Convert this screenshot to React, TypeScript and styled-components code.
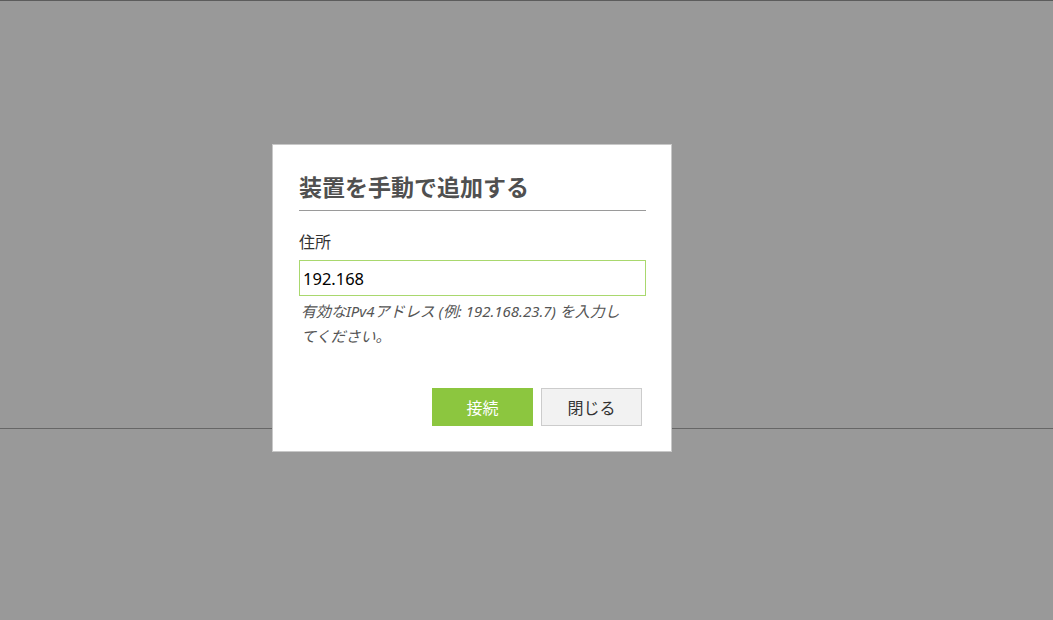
import styled, { createGlobalStyle } from 'styled-components';

const GlobalStyle = createGlobalStyle`
    html, body {
        margin: 0;
        padding: 0;
    }
    body {
        font-family: 'Noto Sans', 'Noto Sans CJK JP', sans-serif;
        background: #999999;
    }
`;

function App() {
    return (
        <Page>
            <GlobalStyle />
            <Backdrop>
                <UpperPane />
            </Backdrop>
            <Dialog>
                <Title>装置を手動で追加する</Title>
                <Field>
                    <Label>住所</Label>
                    <Input defaultValue="192.168" />
                    <Hint>
                        有効なIPv4アドレス (例: 192.168.23.7) を入力し
                        <br />
                        てください。
                    </Hint>
                </Field>
                <Actions>
                    <Button variant="primary">接続</Button>
                    <Button variant="secondary">閉じる</Button>
                </Actions>
            </Dialog>
        </Page>
    );
}

export default App;

const Page = styled.div`
    position: relative;
    width: 1053px;
    height: 620px;
    overflow: hidden;
    background: #999999;
`;

const Backdrop = styled.div`
    height: 100%;
    display: flex;
    flex-direction: column;
`;

const UpperPane = styled.div`
    height: 427px;
    border-top: 1px solid #5c5c5c;
    border-bottom: 1px solid #666666;
`;

const Dialog = styled.div`
    position: absolute;
    left: 272px;
    top: 144px;
    width: 400px;
    height: 308px;
    box-sizing: border-box;
    padding: 24px 25px 0 26px;
    background: #ffffff;
    border: 1px solid #c8c8c8;
    display: flex;
    flex-direction: column;
`;

const Title = styled.h2`
    margin: 0;
    padding-bottom: 7px;
    font-family: 'Noto Sans CJK JP', sans-serif;
    font-size: 23px;
    font-weight: 700;
    line-height: 34px;
    color: #505050;
    border-bottom: 1px solid #9a9a9a;
`;

const Field = styled.div`
    display: flex;
    flex-direction: column;
    margin-top: 19px;
`;

const Label = styled.label`
    font-family: 'Noto Sans CJK JP', sans-serif;
    font-size: 16px;
    line-height: 22px;
    color: #333333;
    margin-bottom: 8px;
`;

const Input = styled.input`
    height: 36px;
    box-sizing: border-box;
    padding: 0 3px;
    border: 1px solid #a9d86e;
    outline: none;
    font-family: 'Noto Sans', 'Noto Sans CJK JP', sans-serif;
    font-size: 16.5px;
    color: #000000;
`;

const Hint = styled.p`
    margin: 3px 0 0;
    padding-left: 2px;
    font-family: 'Noto Sans', 'Noto Sans CJK JP', sans-serif;
    font-size: 15px;
    font-style: italic;
    line-height: 25px;
    color: #555555;
`;

const Actions = styled.div`
    display: flex;
    justify-content: flex-end;
    gap: 8px;
    margin-top: 39px;
    padding-right: 4px;
`;

const Button = styled.button<{ variant: 'primary' | 'secondary' }>`
    width: 101px;
    height: 38px;
    box-sizing: border-box;
    font-family: 'Noto Sans CJK JP', sans-serif;
    font-size: 16px;
    cursor: pointer;
    border: 1px solid ${(props) => (props.variant === 'primary' ? '#8cc63f' : '#cccccc')};
    background: ${(props) => (props.variant === 'primary' ? '#8cc63f' : '#f2f2f2')};
    color: ${(props) => (props.variant === 'primary' ? '#ffffff' : '#333333')};
`;
